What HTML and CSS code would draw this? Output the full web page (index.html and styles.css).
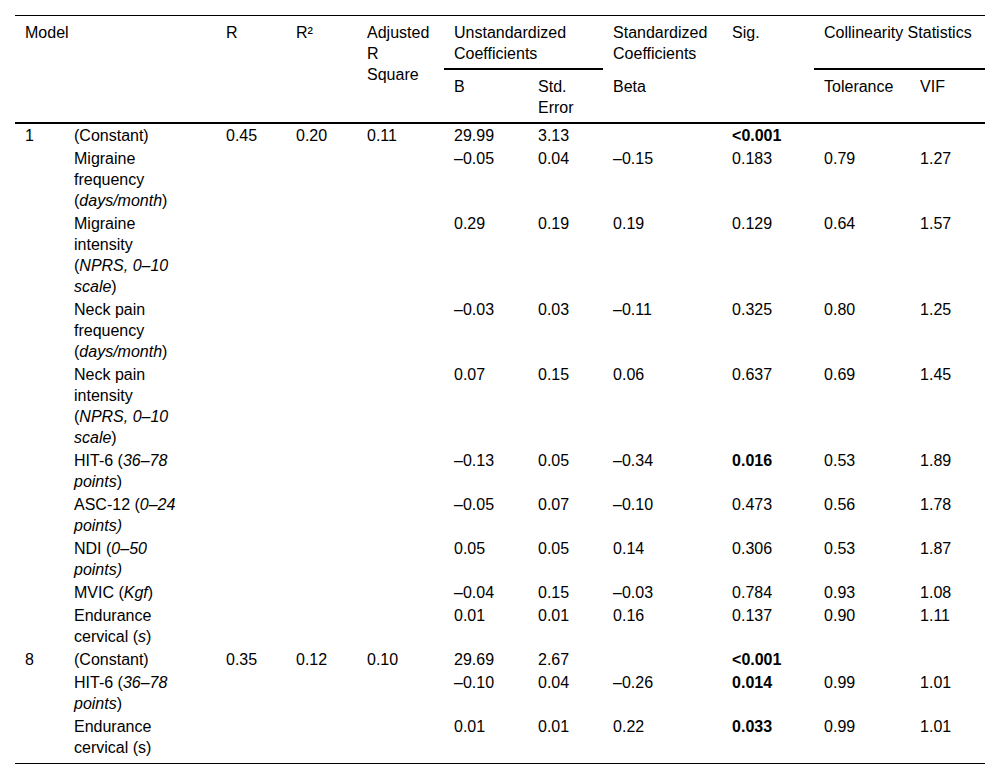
FILE: index.html
```html
<!DOCTYPE html>
<html lang="en">
<head>
<meta charset="utf-8">
<title>Regression table</title>
<link rel="stylesheet" href="styles.css">
</head>
<body>
<table class="reg">
  <colgroup>
    <col class="c-model"><col class="c-var"><col class="c-r"><col class="c-r2"><col class="c-adj">
    <col class="c-b"><col class="c-se"><col class="c-beta"><col class="c-sig"><col class="c-tol"><col class="c-vif">
  </colgroup>
  <thead>
    <tr class="h1">
      <th colspan="2" rowspan="2" class="end">Model</th>
      <th rowspan="2" class="end">R</th>
      <th rowspan="2" class="end">R²</th>
      <th rowspan="2" class="end">Adjusted R Square</th>
      <th colspan="2" class="group">Unstandardized Coefficients</th>
      <th>Standardized Coefficients</th>
      <th rowspan="2" class="end">Sig.</th>
      <th colspan="2" class="group">Collinearity Statistics</th>
    </tr>
    <tr class="h2">
      <th class="end">B</th>
      <th class="end">Std. Error</th>
      <th class="end">Beta</th>
      <th class="end">Tolerance</th>
      <th class="end">VIF</th>
    </tr>
  </thead>
  <tbody>
    <tr>
      <td>1</td><td class="var">(Constant)</td><td>0.45</td><td>0.20</td><td>0.11</td>
      <td>29.99</td><td>3.13</td><td></td><td><b>&lt;0.001</b></td><td></td><td></td>
    </tr>
    <tr>
      <td></td><td class="var">Migraine frequency (<i>days/month</i>)</td><td></td><td></td><td></td>
      <td>–0.05</td><td>0.04</td><td>–0.15</td><td>0.183</td><td>0.79</td><td>1.27</td>
    </tr>
    <tr>
      <td></td><td class="var">Migraine intensity (<i>NPRS, 0–10 scale</i>)</td><td></td><td></td><td></td>
      <td>0.29</td><td>0.19</td><td>0.19</td><td>0.129</td><td>0.64</td><td>1.57</td>
    </tr>
    <tr>
      <td></td><td class="var">Neck pain frequency (<i>days/month</i>)</td><td></td><td></td><td></td>
      <td>–0.03</td><td>0.03</td><td>–0.11</td><td>0.325</td><td>0.80</td><td>1.25</td>
    </tr>
    <tr>
      <td></td><td class="var">Neck pain intensity (<i>NPRS, 0–10 scale</i>)</td><td></td><td></td><td></td>
      <td>0.07</td><td>0.15</td><td>0.06</td><td>0.637</td><td>0.69</td><td>1.45</td>
    </tr>
    <tr>
      <td></td><td class="var">HIT-6 (<i>36–78 points</i>)</td><td></td><td></td><td></td>
      <td>–0.13</td><td>0.05</td><td>–0.34</td><td><b>0.016</b></td><td>0.53</td><td>1.89</td>
    </tr>
    <tr>
      <td></td><td class="var">ASC-12 (<i>0–24 points)</i></td><td></td><td></td><td></td>
      <td>–0.05</td><td>0.07</td><td>–0.10</td><td>0.473</td><td>0.56</td><td>1.78</td>
    </tr>
    <tr>
      <td></td><td class="var">NDI (<i>0–50 points)</i></td><td></td><td></td><td></td>
      <td>0.05</td><td>0.05</td><td>0.14</td><td>0.306</td><td>0.53</td><td>1.87</td>
    </tr>
    <tr>
      <td></td><td class="var">MVIC (<i>Kgf</i>)</td><td></td><td></td><td></td>
      <td>–0.04</td><td>0.15</td><td>–0.03</td><td>0.784</td><td>0.93</td><td>1.08</td>
    </tr>
    <tr>
      <td></td><td class="var">Endurance cervical (<i>s</i>)</td><td></td><td></td><td></td>
      <td>0.01</td><td>0.01</td><td>0.16</td><td>0.137</td><td>0.90</td><td>1.11</td>
    </tr>
    <tr>
      <td>8</td><td class="var">(Constant)</td><td>0.35</td><td>0.12</td><td>0.10</td>
      <td>29.69</td><td>2.67</td><td></td><td><b>&lt;0.001</b></td><td></td><td></td>
    </tr>
    <tr>
      <td></td><td class="var">HIT-6 (<i>36–78 points</i>)</td><td></td><td></td><td></td>
      <td>–0.10</td><td>0.04</td><td>–0.26</td><td><b>0.014</b></td><td>0.99</td><td>1.01</td>
    </tr>
    <tr class="last">
      <td></td><td class="var">Endurance cervical (s)</td><td></td><td></td><td></td>
      <td>0.01</td><td>0.01</td><td>0.22</td><td><b>0.033</b></td><td>0.99</td><td>1.01</td>
    </tr>
  </tbody>
</table>
</body>
</html>
```

FILE: styles.css
```css
html, body {
  margin: 0;
  padding: 0;
  background: #fff;
}

body {
  padding: 15px;
  font-family: "Liberation Sans", Arial, sans-serif;
  font-size: 16px;
  line-height: 21px;
  color: #000;
}

.reg {
  width: 970px;
  table-layout: fixed;
  border-collapse: separate;
  border-spacing: 0;
  border-top: 1px solid #000;
  border-bottom: 1px solid #000;
}

.c-model { width: 49px; }
.c-var { width: 152px; }
.c-r { width: 70px; }
.c-r2 { width: 71px; }
.c-adj { width: 87px; }
.c-b { width: 84px; }
.c-se { width: 75px; }
.c-beta { width: 119px; }
.c-sig { width: 92px; }
.c-tol { width: 96px; }
.c-vif { width: 75px; }

.reg th {
  font-weight: normal;
  text-align: left;
  vertical-align: top;
  padding: 6px 10px 4px 10px;
}

.reg th.group,
.reg th.end {
  border-bottom: 2px solid #000;
}

.reg td {
  text-align: left;
  vertical-align: top;
  padding: 1px 10px 1px 10px;
}

.reg td.var {
  padding-right: 30px;
}

.reg tr.last td {
  padding-bottom: 5px;
}

.reg b {
  font-weight: bold;
}
```
